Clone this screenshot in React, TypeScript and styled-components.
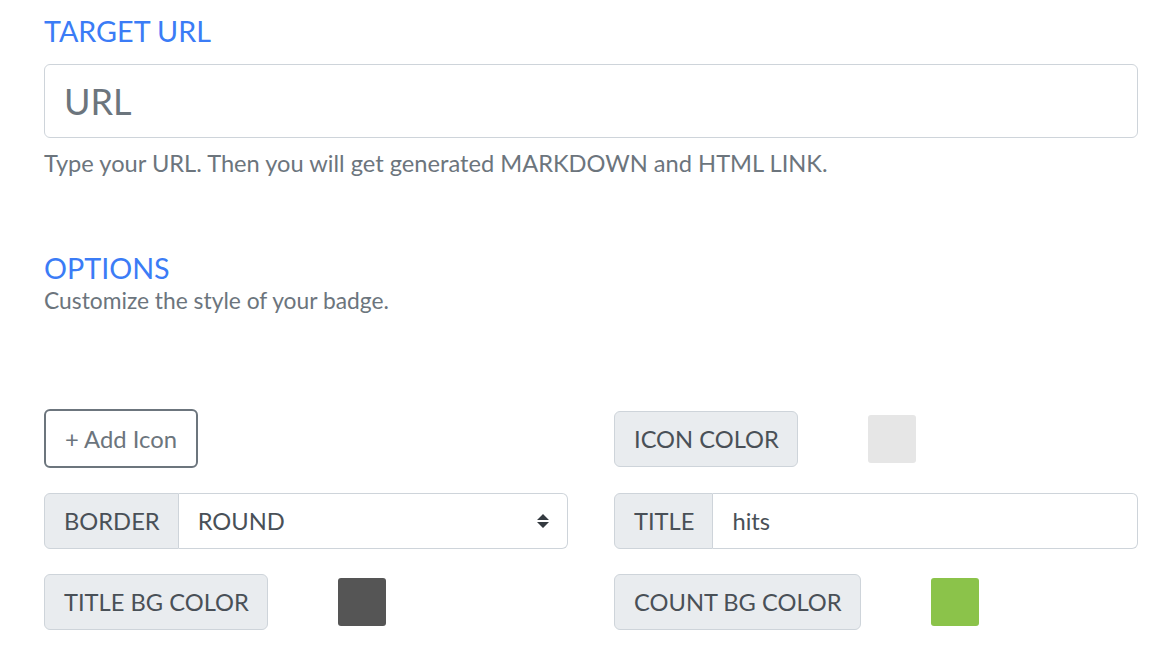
import styled, { createGlobalStyle } from 'styled-components';

const GlobalStyle = createGlobalStyle`
    html, body {
        margin: 0;
        padding: 0;
        background: #fff;
    }
    body {
        font-family: Lato, "Open Sans", sans-serif;
        color: #495057;
    }
`;

const Page = styled.main`
    padding: 14px 29px 0 44px;
    box-sizing: border-box;
    width: 1167px;
`;

const Heading = styled.h4`
    margin: 0;
    color: #3b7cf6;
    font-size: 28.7px;
    font-weight: 400;
    line-height: 34px;
`;

const UrlInput = styled.input`
    display: block;
    box-sizing: border-box;
    width: 100%;
    height: 74px;
    margin-top: 16px;
    padding: 0 19px;
    border: 1px solid #ced4da;
    border-radius: 6px;
    font-family: inherit;
    font-size: 36px;
    color: #495057;
    outline: none;

    &::placeholder {
        color: #6c757d;
    }
`;

const Help = styled.p<{ $gap?: number; $size?: number }>`
    margin: ${({ $gap }) => $gap ?? 0}px 0 0;
    color: #6c757d;
    font-size: ${({ $size }) => $size ?? 23}px;
    line-height: 30px;
`;

const OptionsBlock = styled.section`
    margin-top: 73px;
`;

const Grid = styled.div`
    display: grid;
    grid-template-columns: 524px 524px;
    column-gap: 46px;
    row-gap: 25px;
    margin-top: 94px;
    align-items: center;
`;

const OutlineButton = styled.button`
    justify-self: start;
    height: 59px;
    padding: 0 19px;
    background: #fff;
    border: 2.5px solid #6c757d;
    border-radius: 6px;
    color: #6c757d;
    font-family: inherit;
    font-size: 23.8px;
`;

const Group = styled.div`
    display: flex;
    height: 56px;
`;

const Addon = styled.span<{ $alone?: boolean }>`
    display: flex;
    align-items: center;
    box-sizing: border-box;
    padding: 0 18px 0 19px;
    background: #e9ecef;
    border: 1px solid #ced4da;
    border-radius: ${({ $alone }) => ($alone ? '6px' : '6px 0 0 6px')};
    font-size: 23.7px;
    color: #495057;
    white-space: nowrap;
`;

const Field = styled.div`
    position: relative;
    flex: 1;
    display: flex;
    align-items: center;
    box-sizing: border-box;
    padding: 0 19px;
    border: 1px solid #ced4da;
    border-left: none;
    border-radius: 0 6px 6px 0;
    font-size: 23.7px;
    color: #495057;
`;

const Caret = styled.svg`
    position: absolute;
    right: 18px;
    top: 50%;
    transform: translateY(-50%);
`;

const ColorRow = styled.div`
    display: flex;
    align-items: center;
    gap: 70px;
`;

const Swatch = styled.div<{ $color: string }>`
    width: 48px;
    height: 48px;
    border-radius: 3px;
    background: ${({ $color }) => $color};
`;

function ColorOption({ label, color }: { label: string; color: string }) {
    return (
        <ColorRow>
            <Group>
                <Addon $alone>{label}</Addon>
            </Group>
            <Swatch $color={color} />
        </ColorRow>
    );
}

export default function App() {
    return (
        <>
            <GlobalStyle />
            <Page>
                <Heading>TARGET URL</Heading>
                <UrlInput placeholder="URL" />
                <Help $gap={10} $size={23.65}>
                    Type your URL. Then you will get generated MARKDOWN and HTML LINK.
                </Help>

                <OptionsBlock>
                    <Heading>OPTIONS</Heading>
                    <Help $size={22.8}>Customize the style of your badge.</Help>
                </OptionsBlock>

                <Grid>
                    <OutlineButton>+ Add Icon</OutlineButton>
                    <ColorOption label="ICON COLOR" color="#e6e6e6" />

                    <Group>
                        <Addon>BORDER</Addon>
                        <Field>
                            ROUND
                            <Caret width="12" height="16" viewBox="0 0 12 16">
                                <path d="M6 1 L12 7 H0 Z M0 9 H12 L6 15 Z" fill="#343a40" />
                            </Caret>
                        </Field>
                    </Group>
                    <Group>
                        <Addon>TITLE</Addon>
                        <Field>hits</Field>
                    </Group>

                    <ColorOption label="TITLE BG COLOR" color="#555555" />
                    <ColorOption label="COUNT BG COLOR" color="#8bc34a" />
                </Grid>
            </Page>
        </>
    );
}
